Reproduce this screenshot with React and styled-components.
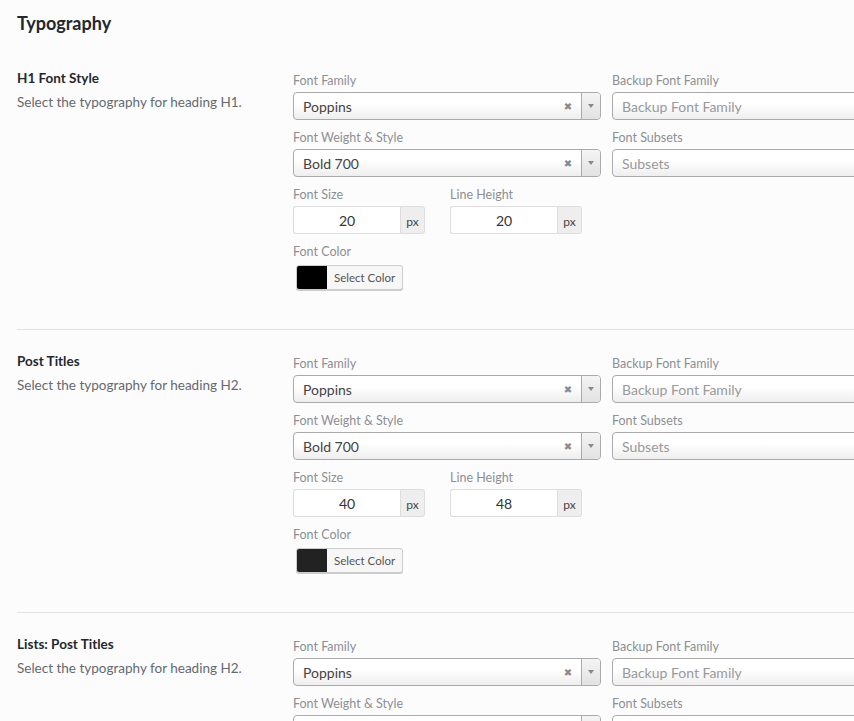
import React from "react";
import styled, { createGlobalStyle } from "styled-components";

const Global = createGlobalStyle`
  html, body { margin: 0; padding: 0; background: #fcfcfc; overflow: hidden; }
  body { font-family: "Lato", "Open Sans", sans-serif; color: #444; }
`;

const Page = styled.div`
  width: 854px;
  height: 721px;
  overflow: hidden;
  padding: 0 0 0 17px;
  box-sizing: border-box;
`;

const Title = styled.h2`
  margin: 0;
  padding-top: 11px;
  height: 47px;
  box-sizing: border-box;
  font-size: 18px;
  font-weight: 700;
  color: #23282d;
  line-height: 24px;
`;

const Section = styled.section`
  display: grid;
  grid-template-columns: 276px 1fr;
  padding: 21px 0 39px;
  border-bottom: ${(p) => (p.$last ? "none" : "1px solid #e2e2e2")};
`;

const Info = styled.div`
  padding-top: 0;
`;

const SectionTitle = styled.h3`
  margin: 0 0 5px;
  font-size: 13.5px;
  font-weight: 700;
  color: #23282d;
  line-height: 20px;
`;

const Desc = styled.p`
  margin: 0;
  font-size: 13.5px;
  color: #646970;
  line-height: 18px;
`;

const Fields = styled.div`
  display: grid;
  grid-template-columns: 308px 320px;
  column-gap: 11px;
  row-gap: 10px;
  padding-top: 5px;
`;

const Field = styled.div`
  display: flex;
  flex-direction: column;
  grid-column: ${(p) => (p.$full ? "1 / -1" : "auto")};
`;

const Label = styled.label`
  font-size: 12.5px;
  color: #8c8f94;
  line-height: 16px;
  margin-bottom: 3px;
`;

const SelectBox = styled.div`
  height: 28px;
  box-sizing: border-box;
  border: 1px solid #aaa;
  border-radius: 4px;
  background: linear-gradient(#ffffff 40%, #eeeeee);
  display: flex;
  align-items: center;
  font-size: 14px;
  overflow: hidden;
`;

const SelectValue = styled.span`
  flex: 1;
  padding-left: 9px;
  color: ${(p) => (p.$placeholder ? "#999" : "#444")};
  white-space: nowrap;
`;

const Clear = styled.span`
  width: 18px;
  text-align: center;
  font-size: 10px;
  font-weight: 700;
  color: #8a8a8a;
  margin-right: 4px;
  font-family: "DejaVu Sans", sans-serif;
`;

const Arrow = styled.span`
  width: 18px;
  align-self: stretch;
  border-left: 1px solid #aaa;
  background: linear-gradient(#f4f4f4, #e2e2e2);
  display: flex;
  align-items: center;
  justify-content: center;
  &::after {
    content: "";
    border-left: 3px solid transparent;
    border-right: 3px solid transparent;
    border-top: 4px solid #888;
  }
`;

const SizeRow = styled.div`
  display: flex;
  gap: 25px;
  grid-column: 1 / -1;
`;

const InputGroup = styled.div`
  display: flex;
  width: 132px;
  height: 28px;
`;

const NumInput = styled.div`
  flex: 1;
  box-sizing: border-box;
  border: 1px solid #ddd;
  border-right: none;
  border-radius: 3px 0 0 3px;
  background: #fff;
  font-size: 14px;
  color: #333;
  display: flex;
  align-items: center;
  justify-content: center;
`;

const Addon = styled.span`
  width: 25px;
  box-sizing: border-box;
  border: 1px solid #ddd;
  border-radius: 0 3px 3px 0;
  background: #eee;
  font-size: 12px;
  color: #444;
  display: flex;
  align-items: center;
  justify-content: center;
  padding-top: 2px;
`;

const ColorButton = styled.div`
  margin: 2px 0 0 3px;
  display: inline-flex;
  align-self: flex-start;
  height: 25px;
  box-sizing: border-box;
  border: 1px solid #ccc;
  border-radius: 3px;
  background: #f7f7f7;
  box-shadow: 0 1px 0 #ccc;
  overflow: hidden;
`;

const Swatch = styled.span`
  width: 30px;
  background: ${(p) => p.$color};
`;

const ColorText = styled.span`
  padding: 0 7px 0 7px;
  font-size: 11.5px;
  color: #555;
  display: flex;
  align-items: center;
`;

function Select({ value, placeholder, clearable }) {
  return (
    <SelectBox>
      <SelectValue $placeholder={!value}>{value || placeholder}</SelectValue>
      {clearable && <Clear>✖</Clear>}
      {clearable && <Arrow />}
    </SelectBox>
  );
}

function NumberField({ label, value }) {
  return (
    <Field>
      <Label>{label}</Label>
      <InputGroup>
        <NumInput>{value}</NumInput>
        <Addon>px</Addon>
      </InputGroup>
    </Field>
  );
}

function TypoSection({ title, desc, size, lh, color, last }) {
  return (
    <Section $last={last}>
      <Info>
        <SectionTitle>{title}</SectionTitle>
        <Desc>{desc}</Desc>
      </Info>
      <Fields>
        <Field>
          <Label>Font Family</Label>
          <Select value="Poppins" clearable />
        </Field>
        <Field>
          <Label>Backup Font Family</Label>
          <Select placeholder="Backup Font Family" />
        </Field>
        <Field>
          <Label>Font Weight &amp; Style</Label>
          <Select value="Bold 700" clearable />
        </Field>
        <Field>
          <Label>Font Subsets</Label>
          <Select placeholder="Subsets" />
        </Field>
        <SizeRow>
          <NumberField label="Font Size" value={size} />
          <NumberField label="Line Height" value={lh} />
        </SizeRow>
        <Field $full>
          <Label>Font Color</Label>
          <ColorButton>
            <Swatch $color={color} />
            <ColorText>Select Color</ColorText>
          </ColorButton>
        </Field>
      </Fields>
    </Section>
  );
}

export default function App() {
  return (
    <Page>
      <Global />
      <Title>Typography</Title>
      <TypoSection title="H1 Font Style" desc="Select the typography for heading H1." size="20" lh="20" color="#000" />
      <TypoSection title="Post Titles" desc="Select the typography for heading H2." size="40" lh="48" color="#222" />
      <TypoSection title="Lists: Post Titles" desc="Select the typography for heading H2." size="40" lh="48" color="#222" last />
    </Page>
  );
}
